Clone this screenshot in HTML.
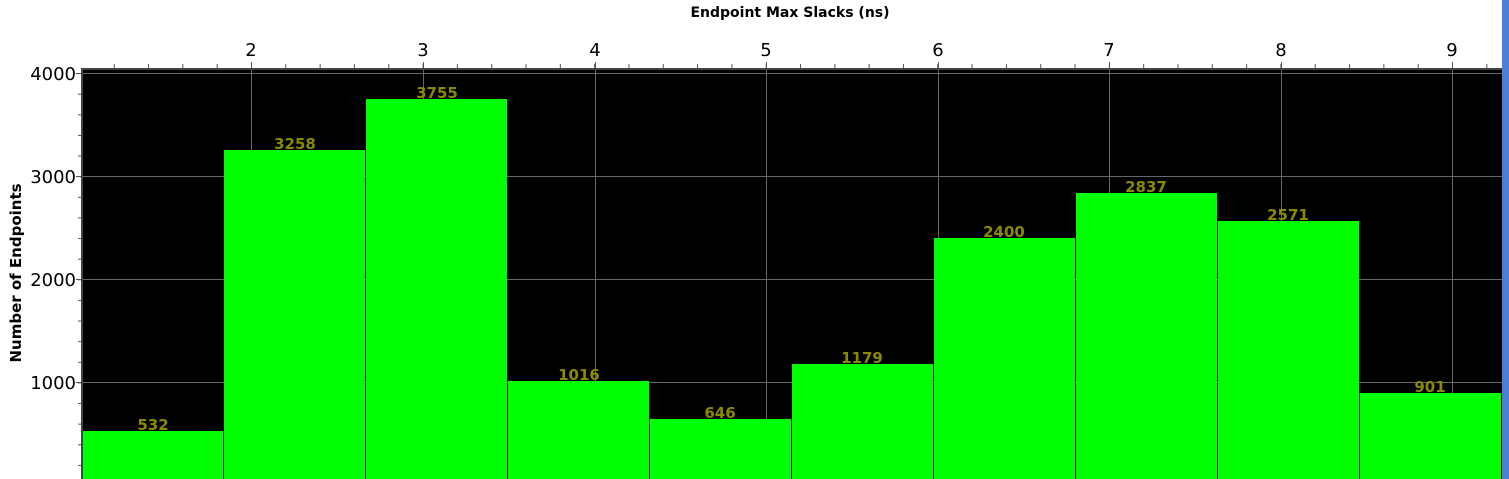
<!DOCTYPE html>
<html><head><meta charset="utf-8"><style>
html,body{margin:0;padding:0;background:#fff;width:1509px;height:479px;overflow:hidden}
svg{display:block;font-family:"DejaVu Sans","Liberation Sans",sans-serif}
</style></head><body>
<svg width="1509" height="479" viewBox="0 0 1509 479" xmlns="http://www.w3.org/2000/svg">
<defs>
<pattern id="xt" x="251" y="0" width="34.314" height="479" patternUnits="userSpaceOnUse">
<rect x="0" y="64" width="1" height="4" fill="#555"/>
</pattern>
<pattern id="yt" x="0" y="485.5" width="1509" height="20.62" patternUnits="userSpaceOnUse">
<rect x="78" y="0" width="4" height="1" fill="#555"/>
</pattern>
</defs>
<rect width="1509" height="479" fill="#fff"/>
<rect x="1502" y="0" width="7" height="479" fill="#4a7fd4"/>
<text x="790" y="17" font-size="14" font-weight="bold" text-anchor="middle" fill="#000">Endpoint Max Slacks (ns)</text>
<rect x="82" y="60" width="1420" height="8" fill="url(#xt)"/>
<rect x="74" y="69" width="8" height="410" fill="url(#yt)"/>
<g fill="#555">
<rect x="251" y="62" width="1" height="6"/><rect x="423" y="62" width="1" height="6"/><rect x="595" y="62" width="1" height="6"/><rect x="766" y="62" width="1" height="6"/><rect x="938" y="62" width="1" height="6"/><rect x="1109" y="62" width="1" height="6"/><rect x="1281" y="62" width="1" height="6"/><rect x="1452" y="62" width="1" height="6"/>
<rect x="76" y="73" width="6" height="1"/><rect x="76" y="176" width="6" height="1"/><rect x="76" y="279" width="6" height="1"/><rect x="76" y="382" width="6" height="1"/>
</g>
<g font-size="18" fill="#000" text-anchor="middle">
<text x="251" y="56">2</text><text x="423" y="56">3</text><text x="595" y="56">4</text><text x="766" y="56">5</text><text x="938" y="56">6</text><text x="1109" y="56">7</text><text x="1281" y="56">8</text><text x="1452" y="56">9</text>
</g>
<g font-size="18" fill="#000" text-anchor="end">
<text x="76" y="80">4000</text><text x="76" y="183">3000</text><text x="76" y="286">2000</text><text x="76" y="389">1000</text>
</g>
<text transform="translate(21,273) rotate(-90)" font-size="15" font-weight="bold" text-anchor="middle" fill="#000">Number of Endpoints</text>
<rect x="82" y="68" width="1420" height="411" fill="#000"/>
<rect x="82" y="68" width="1420" height="2" fill="#444"/>
<rect x="81" y="68" width="2" height="411" fill="#444"/>
<g fill="#666">
<rect x="83" y="73" width="1419" height="1"/><rect x="83" y="176" width="1419" height="1"/><rect x="83" y="279" width="1419" height="1"/><rect x="83" y="382" width="1419" height="1"/>
<rect x="251" y="70" width="1" height="409"/><rect x="423" y="70" width="1" height="409"/><rect x="595" y="70" width="1" height="409"/><rect x="766" y="70" width="1" height="409"/><rect x="938" y="70" width="1" height="409"/><rect x="1109" y="70" width="1" height="409"/><rect x="1281" y="70" width="1" height="409"/><rect x="1452" y="70" width="1" height="409"/>
</g>
<g fill="#00ff00">
<rect x="83" y="431" width="140" height="48"/>
<rect x="224" y="150" width="141" height="329"/>
<rect x="366" y="99" width="141" height="380"/>
<rect x="508" y="381" width="141" height="98"/>
<rect x="650" y="419" width="141" height="60"/>
<rect x="792" y="364" width="141" height="115"/>
<rect x="934" y="238" width="141" height="241"/>
<rect x="1076" y="193" width="141" height="286"/>
<rect x="1218" y="221" width="141" height="258"/>
<rect x="1360" y="393" width="141" height="86"/>
</g>
<g font-size="15" font-weight="bold" fill="#8a8a00" text-anchor="middle">
<text x="153" y="430">532</text>
<text x="295" y="149">3258</text>
<text x="437" y="98">3755</text>
<text x="579" y="380">1016</text>
<text x="720" y="418">646</text>
<text x="862" y="363">1179</text>
<text x="1004" y="237">2400</text>
<text x="1146" y="192">2837</text>
<text x="1288" y="220">2571</text>
<text x="1430" y="392">901</text>
</g>
</svg>
</body></html>
